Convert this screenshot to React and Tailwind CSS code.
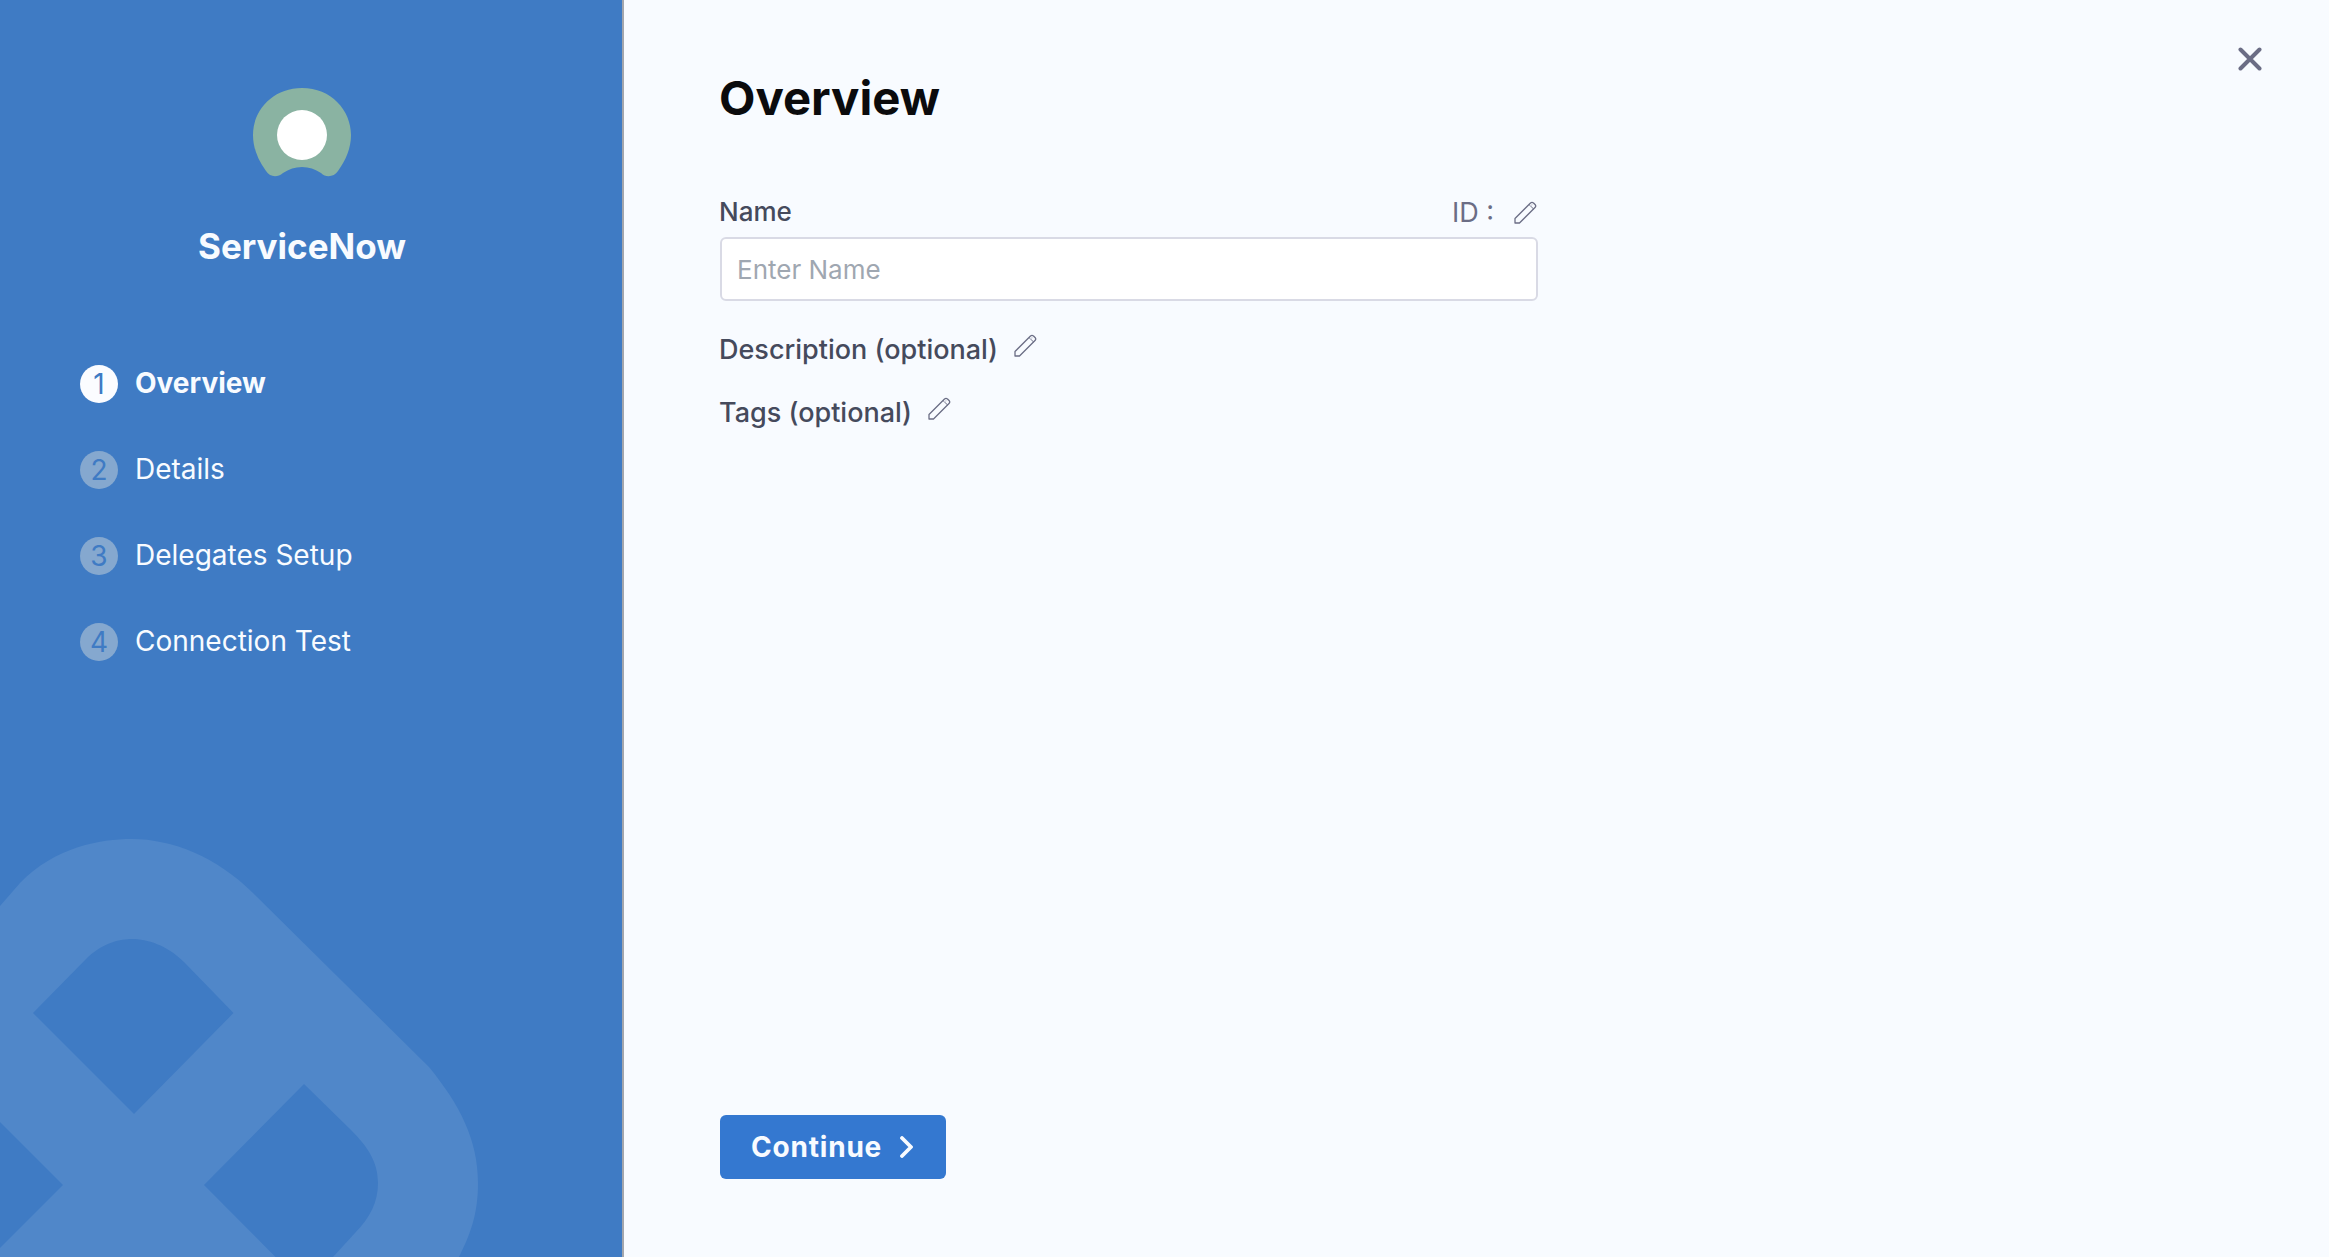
import React from "react";

const steps = [
  { n: 1, label: "Overview", active: true },
  { n: 2, label: "Details" },
  { n: 3, label: "Delegates Setup" },
  { n: 4, label: "Connection Test" },
];

function Pencil() {
  return (
    <svg width="23" height="23" viewBox="0 0 23 23" fill="none" className="shrink-0">
      <path
        d="M1 17.5 L16.5 2 Q18 0.8 19.5 2 L21.3 3.8 Q22.3 5.2 21 6.5 L5.5 22 L1 22 Z"
        stroke="#6b6d85"
        strokeWidth="1.3"
        strokeLinejoin="round"
      />
      <path d="M15 3.5 L19.8 8.2" stroke="#6b6d85" strokeWidth="1" />
      <path d="M16.5 5 L18.5 3.2" stroke="#d9dae5" strokeWidth="1.5" />
    </svg>
  );
}

function Watermark() {
  return (
    <svg
      className="absolute left-0 top-0 pointer-events-none"
      width="622"
      height="1257"
      viewBox="0 0 622 1257"
    >
      <path
        fillRule="evenodd"
        fill="#5087c9"
        d="M0 906 L20 883 C55 847 100 839 132 839 C172 839 217 857 253 893 L429 1067 C460 1105 478 1140 478 1183 C478 1215 470 1235 459 1257 L0 1257 Z
           M33 1013 L88 957 C105 942 120 939 132 939 C147 939 167 945 184 962 L233.5 1013 L134 1114 Z
           M304 1084 L204 1185 L275.5 1257 L333 1257 L355 1233 C370 1218 378 1202 378 1183 C378 1162 368 1147 351 1130 Z
           M0 1122 L63 1185 L0 1248 Z"
      />
    </svg>
  );
}

export default function App() {
  return (
    <div className="flex h-screen overflow-hidden bg-[#f8fbff] font-['Inter',sans-serif]">
      <aside className="relative w-[624px] shrink-0 border-r-2 border-[#a3a6ad] bg-[#3f7bc4] pt-[88px]">
        <Watermark />
        <div className="relative flex flex-col items-center pr-[18px]">
          <svg width="98" height="89" viewBox="0 0 98 89">
            <path
              fill="#8ab3a2"
              d="M49 0 C78 0 98 22 98 47 C98 60 93 72 85 83 C81 89 73 90 68 85 C62 81 56 79 49 79 C42 79 36 81 30 85 C24 90 17 89 13 83 C5 72 0 60 0 47 C0 22 20 0 49 0 Z"
            />
            <circle cx="49" cy="47" r="25" fill="#ffffff" />
          </svg>
          <h2 className="mt-[47px] text-[35px] leading-[44px] font-bold text-[#f8fbff]">
            ServiceNow
          </h2>
        </div>
        <nav className="relative mt-[97px] flex flex-col gap-[48px] pl-[80px]">
          {steps.map((s) => (
            <div key={s.n} className="flex h-[38px] items-center gap-[17px]">
              <span
                className={
                  s.active
                    ? "flex size-[38px] items-center justify-center rounded-full bg-[#fbfcff] text-[28px] text-[#3f7bc4]"
                    : "flex size-[38px] items-center justify-center rounded-full bg-[#85a8cf] text-[28px] text-[#3f7bc4]"
                }
              >
                {s.n}
              </span>
              <span
                className={
                  s.active
                    ? "-mt-[2px] text-[28px] font-bold text-[#f8fbff] leading-none"
                    : "-mt-[2px] text-[28px] font-normal text-[#f8fbff] leading-none"
                }
              >
                {s.label}
              </span>
            </div>
          ))}
        </nav>
      </aside>

      <main className="relative flex min-w-0 flex-1 flex-col pl-[96px] pt-[70px] pb-[78px]">
        <button className="absolute left-[1614px] top-[47px] text-[#6b6d85]">
          <svg width="24" height="24" viewBox="0 0 24 24" fill="none" stroke="currentColor" strokeWidth="4" strokeLinecap="round">
            <path d="M2.5 2.5 L21.5 21.5 M21.5 2.5 L2.5 21.5" />
          </svg>
        </button>

        <h1 className="-ml-px text-[47.3px] leading-[56px] font-bold text-[#0b0b0d]">Overview</h1>

        <div className="mt-[71px] flex h-[30px] w-[818px] items-center justify-between">
          <label className="-ml-px -mt-[2px] text-[26px] font-medium text-[#454a5c]">Name</label>
          <div className="mr-[1px] flex items-center gap-[20px]">
            <span className="mt-[2px] text-[27px] text-[#6b6d85]">ID :</span>
            <Pencil />
          </div>
        </div>
        <input
          placeholder="Enter Name"
          className="mt-[10px] h-[64px] w-[818px] rounded-[6px] border-2 border-[#d9dae5] bg-white px-[15px] text-[26px] outline-none placeholder:text-[#9fa7b1]"
        />

        <div className="mt-[34px] -ml-px flex h-[30px] items-center gap-[16px]">
          <span className="text-[27px] font-medium text-[#454a5c]">Description (optional)</span>
          <div className="-mt-[10px]"><Pencil /></div>
        </div>
        <div className="mt-[33px] -ml-px flex h-[30px] items-center gap-[16px]">
          <span className="mt-px text-[27px] font-medium text-[#454a5c]">Tags (optional)</span>
          <div className="-mt-[10px]"><Pencil /></div>
        </div>

        <button className="mt-auto flex h-[64px] w-[226px] items-center gap-[17px] rounded-[6px] bg-[#3478d0] pl-[31px] text-[28px] font-bold tracking-[0.8px] text-[#f8fbff]">
          Continue
          <svg width="14" height="22" viewBox="0 0 14 22" fill="none" stroke="currentColor" strokeWidth="3.8" strokeLinecap="round" strokeLinejoin="round">
            <path d="M3 2 L12 11 L3 20" />
          </svg>
        </button>
      </main>
    </div>
  );
}
